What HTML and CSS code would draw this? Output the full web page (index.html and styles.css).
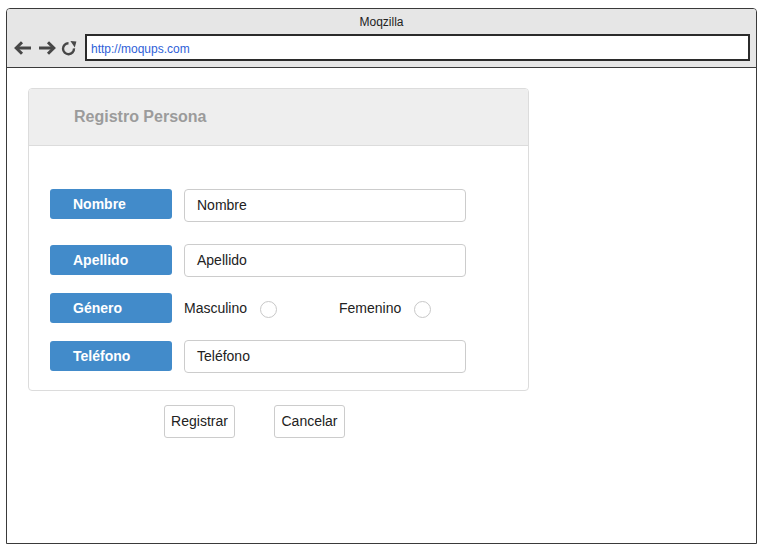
FILE: index.html
```html
<!DOCTYPE html>
<html lang="es">
<head>
<meta charset="utf-8">
<title>Moqzilla</title>
<link rel="stylesheet" href="styles.css">
</head>
<body>
<div class="frame">
  <div class="chrome">
    <div class="chrome-title">Moqzilla</div>
    <div class="chrome-row">
      <svg class="nav-icons" width="64" height="16" viewBox="0 0 64 16" aria-hidden="true">
        <g fill="none" stroke="#474747" stroke-width="3">
          <path d="M2 8 H17"/>
          <path d="M8 2.3 L2.2 8 L8 13.7"/>
          <path d="M25 8 H40"/>
          <path d="M34 2.3 L39.8 8 L34 13.7"/>
        </g>
        <path d="M54.5 3.2 A5.5 5.5 0 1 0 60 8.4" fill="none" stroke="#474747" stroke-width="2.4"/>
        <path d="M56.4 1 L62.4 1.4 L60.8 7.4 Z" fill="#474747"/>
      </svg>
      <div class="url">http://moqups.com</div>
    </div>
  </div>
  <div class="page">
    <div class="panel">
      <div class="panel-head">Registro Persona</div>
      <div class="panel-body">
        <div class="row row-1">
          <div class="tag">Nombre</div>
          <div class="field">Nombre</div>
        </div>
        <div class="row row-2">
          <div class="tag">Apellido</div>
          <div class="field">Apellido</div>
        </div>
        <div class="row row-3">
          <div class="tag">Género</div>
          <div class="options">
            <div class="option"><span>Masculino</span><span class="radio"></span></div>
            <div class="option"><span>Femenino</span><span class="radio"></span></div>
          </div>
        </div>
        <div class="row row-4">
          <div class="tag">Teléfono</div>
          <div class="field">Teléfono</div>
        </div>
      </div>
    </div>
    <div class="actions">
      <div class="btn">Registrar</div>
      <div class="btn">Cancelar</div>
    </div>
  </div>
</div>
</body>
</html>
```

FILE: styles.css
```css
html, body {
  margin: 0;
  padding: 0;
  background: #ffffff;
}
body {
  font-family: "Liberation Sans", Arial, sans-serif;
  color: #222;
}
.frame {
  box-sizing: border-box;
  margin: 8px 0 0 6px;
  width: 751px;
  height: 536px;
  border: 1px solid #3a3a3a;
  border-radius: 4px 4px 0 0;
  overflow: hidden;
}
.chrome {
  background: #e6e6e6;
  border-bottom: 1px solid #3a3a3a;
  padding: 5px 0 6px;
}
.chrome-title {
  text-align: center;
  font-size: 12px;
  line-height: 16px;
  color: #222;
}
.chrome-row {
  display: flex;
  align-items: center;
  margin-top: 4px;
  padding-left: 7px;
  padding-right: 6px;
}
.nav-icons {
  flex: none;
  margin-right: 7px;
}
.url {
  flex: 1;
  box-sizing: border-box;
  height: 27px;
  border: 2px solid #2b2b2b;
  background: #fff;
  font-size: 12px;
  line-height: 20px;
  padding: 3px 0 0 4px;
  color: #2f5fd8;
}
.page {
  padding: 20px 0 0 21px;
}
.panel {
  box-sizing: border-box;
  width: 501px;
  border: 1px solid #dcdcdc;
  border-radius: 4px;
  overflow: hidden;
}
.panel-head {
  background: #eeeeee;
  border-bottom: 1px solid #dcdcdc;
  height: 56px;
  line-height: 56px;
  padding-left: 45px;
  font-size: 16px;
  font-weight: bold;
  color: #9b9b9b;
}
.panel-body {
  padding: 43px 0 17px 21px;
}
.row {
  display: flex;
  align-items: flex-start;
}
.row-2 { margin-top: 22px; }
.row-3 { margin-top: 15px; }
.row-4 { margin-top: 17px; }
.tag {
  box-sizing: border-box;
  width: 122px;
  height: 30px;
  line-height: 30px;
  margin-top: 1px;
  border-radius: 3px;
  background: #428bca;
  color: #fff;
  font-size: 14px;
  font-weight: bold;
  padding-left: 23px;
  margin-right: 12px;
}
.row-1 .tag { margin-top: 0; }
.field {
  box-sizing: border-box;
  width: 282px;
  height: 33px;
  line-height: 31px;
  border: 1px solid #cccccc;
  border-radius: 4px;
  padding-left: 12px;
  font-size: 14px;
  color: #222;
}
.options {
  display: flex;
  gap: 62px;
  align-items: center;
  height: 30px;
  margin-top: 1px;
  font-size: 14px;
  color: #222;
}
.option {
  display: flex;
  align-items: center;
}
.radio {
  box-sizing: border-box;
  width: 17px;
  height: 17px;
  border: 1px solid #c8c8c8;
  border-radius: 50%;
  margin-left: 13px;
  margin-top: 3px;
  background: #fff;
}
.actions {
  display: flex;
  gap: 39px;
  margin: 14px 0 0 136px;
}
.btn {
  box-sizing: border-box;
  width: 71px;
  height: 33px;
  line-height: 31px;
  border: 1px solid #cccccc;
  border-radius: 3px;
  text-align: center;
  font-size: 14px;
  color: #222;
  background: #fff;
}
```
